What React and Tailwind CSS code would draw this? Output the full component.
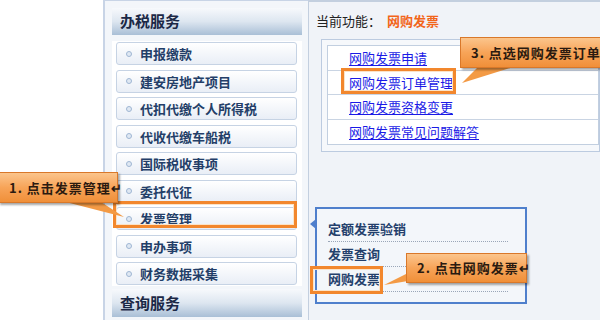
import React from 'react';

const font = { fontFamily: '"Noto Sans CJK SC", "Liberation Sans", sans-serif' };

const menu = [
  '申报缴款',
  '建安房地产项目',
  '代扣代缴个人所得税',
  '代收代缴车船税',
  '国际税收事项',
  '委托代征',
  '发票管理',
  '申办事项',
  '财务数据采集',
];

const links = ['网购发票申请', '网购发票订单管理', '网购发票资格变更', '网购发票常见问题解答'];

const SectionHead = ({ children }) => (
  <div className="h-[27px] flex items-center pl-[8px] bg-gradient-to-b from-[#f7f9fc] via-[#dde6f0] to-[#a9bfd6] text-[15px] font-bold text-[#1b2846]">
    {children}
  </div>
);

const MenuItem = ({ label }) => (
  <div className="h-[23px] mr-[5px] ml-[4px] flex items-center rounded-[3px] border border-[#c6d3e4] bg-gradient-to-b from-white to-[#e9eef6]">
    <span className="ml-[9px] w-[6px] h-[6px] rounded-full border border-[#9fb6d3] bg-[#dfe8f3]" />
    <span className="ml-[8px] text-[13px] font-bold text-[#233e68] leading-none">{label}</span>
  </div>
);

const Callout = ({ className, text, tail }) => (
  <div className={`absolute ${className}`}>
    <svg className="absolute left-0 top-0 overflow-visible" width="1" height="1">
      <polygon points={tail} fill="#f39a45" />
    </svg>
    <div className="relative h-full flex items-center pl-[10px] border border-[#d9782a] bg-gradient-to-b from-[#fbc58c] via-[#f7a458] to-[#f08f38] shadow-[2px_2px_2px_rgba(0,0,0,0.35)] text-[13px] font-bold text-[#2a1a10] whitespace-nowrap tracking-[1px]">
      {text}
    </div>
  </div>
);

const Highlight = ({ className }) => (
  <div className={`absolute border-[3px] border-[#f2872d] ${className}`}>
    <div className="w-full h-full border border-[#fbe3c8]" />
  </div>
);

export default function App() {
  return (
    <div className="relative w-[600px] h-[320px] overflow-hidden bg-white flex" style={font}>
      <div className="w-[103px] shrink-0" />

      {/* 左侧菜单 */}
      <div className="w-[205px] shrink-0 border-l-2 border-t border-[#c8d4e6] bg-[#f3f6fa] pt-[7px] pl-[7px] pr-[6px]">
        <SectionHead>办税服务</SectionHead>
        <div className="flex flex-col gap-[4.5px] mt-[6px] bg-white py-[1px]">
          {menu.map((m) => (
            <MenuItem key={m} label={m} />
          ))}
        </div>
        <div className="mt-[3px]">
          <div className="h-[28px] flex items-center pl-[8px] bg-gradient-to-b from-[#f7f9fc] via-[#dde6f0] to-[#a9bfd6] text-[15px] font-bold text-[#1b2846]">
            查询服务
          </div>
        </div>
      </div>

      {/* 右侧内容 */}
      <div className="flex-1 border-l border-t-2 border-[#c3cfdf] bg-[#f0f3f8] pt-[10px] pl-[7px]">
        <div className="flex items-center text-[13px] h-[18px]">
          <span className="text-[#222]">当前功能：</span>
          <span className="ml-[6px] font-bold text-[#f2651a]">网购发票</span>
        </div>
        <div className="mt-[9px] ml-[5px] border border-[#bccbe0] bg-[#f6f8fb] p-[5px] pr-0 h-[113px]">
          <div className="border border-[#c2cfe0] bg-white">
            {links.map((l, i) => (
              <div
                key={l}
                className={`h-[24.5px] flex items-center pl-[21px] ${i < links.length - 1 ? 'border-b border-[#c9d4e3]' : ''}`}
              >
                <span className="text-[13px] text-[#1a1ae6] underline underline-offset-2 leading-none">{l}</span>
              </div>
            ))}
          </div>
        </div>

        {/* 弹出子菜单 */}
        <div className="relative mt-[55px] -ml-[1px] w-[212px] h-[97px] border-2 border-[#4f7fcc] bg-[#f3f6fa] px-[11px] pt-[8px]">
          <span className="absolute -left-[7px] top-[10px] w-0 h-0 border-y-[5px] border-y-transparent border-r-[6px] border-r-[#4f7fcc]" />
          {['定额发票验销', '发票查询', '网购发票'].map((t) => (
            <div key={t} className="h-[25px] flex items-center border-b border-dotted border-[#9aa6b8] mr-[6px] text-[13px] font-bold text-[#24406c]">
              {t}
            </div>
          ))}
        </div>
      </div>

      {/* 标注 */}
      <Highlight className="left-[113px] top-[201px] w-[184px] h-[27px]" />
      <Highlight className="left-[341px] top-[68px] w-[115px] h-[26px]" />
      <Highlight className="left-[310px] top-[266px] w-[73px] h-[28px]" />

      <Callout
        className="left-[-2px] top-[172px] w-[120px] h-[31px]"
        text="1. 点击发票管理↵"
        tail="60,28 100,28 126,45"
      />
      <Callout
        className="left-[460px] top-[37px] w-[150px] h-[31px]"
        text="3. 点选网购发票订单管理"
        tail="20,28 60,28 2,46"
      />
      <Callout
        className="left-[406px] top-[253px] w-[121px] h-[30px]"
        text="2. 点击网购发票↵"
        tail="2,20 2,28 -22,32"
      />
    </div>
  );
}
